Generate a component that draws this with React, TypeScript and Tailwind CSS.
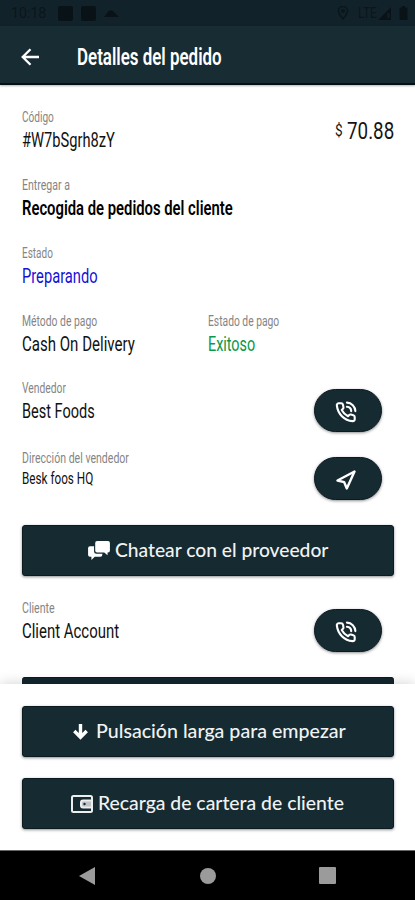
import { useLayoutEffect, useRef, useState, type ReactNode } from 'react';

/** Condensed text: squeezes its glyphs horizontally to occupy `width` pixels. */
function Fit({ width, className = '', children }: { width: number; className?: string; children: ReactNode }) {
  const ref = useRef<HTMLSpanElement>(null);
  const [scale, setScale] = useState(1);
  useLayoutEffect(() => {
    if (ref.current) setScale(width / ref.current.offsetWidth);
  }, [width]);
  return (
    <span className="block text-left" style={{ width }}>
      <span ref={ref} className={`inline-block origin-left whitespace-nowrap ${className}`} style={{ transform: `scaleX(${scale})` }}>
        {children}
      </span>
    </span>
  );
}

function Field({ label, labelWidth, value, valueWidth, tone = 'text-[#111] font-normal', small = false }: {
  label: string; labelWidth: number; value: string; valueWidth: number; tone?: string; small?: boolean;
}) {
  return (
    <div className="flex flex-col">
      <div className="h-5 leading-[21px] text-[14.5px] text-[#858585]"><Fit width={labelWidth}>{label}</Fit></div>
      <div className={small ? 'h-[22px] leading-[22px] text-[16.5px]' : 'h-[26px] leading-[26px] text-[20.5px]'}>
        <Fit width={valueWidth} className={tone}>{value}</Fit>
      </div>
    </div>
  );
}

function Pill({ children }: { children: ReactNode }) {
  return (
    <button className="flex h-[43px] w-[68px] items-center justify-center rounded-full border border-[#0a1a20] bg-[#162a32] pr-[5px] pt-[2px] text-white shadow-[0_1px_3px_rgba(0,0,0,0.45)]">
      {children}
    </button>
  );
}

function Phone() {
  return (
    <svg width="22" height="22" viewBox="0 0 24 24" fill="none" stroke="currentColor" strokeWidth="2.300" strokeLinecap="round" strokeLinejoin="round">
      <path d="M6.800 2.500H4A2 2 0 0 0 2 4.700C3 14 10 21.200 19.300 22a2 2 0 0 0 2.200-2v-2.600a2 2 0 0 0-1.500-1.900l-2.600-.7a2 2 0 0 0-1.900.5l-1.300 1.300a15 15 0 0 1-6.800-6.800l1.300-1.300a2 2 0 0 0 .5-1.900L8.700 4a2 2 0 0 0-1.900-1.500z" />
      <path d="M13 1.800a9.500 9.500 0 0 1 9.200 9.200M13 6.300a5 5 0 0 1 4.700 4.700" />
    </svg>
  );
}

function Wide({ icon, width, children }: { icon: ReactNode; width: number; children: ReactNode }) {
  return (
    <button className="flex h-[51px] w-[372px] shrink-0 items-center rounded-[3px] border border-[#0a1a20] bg-[#162a32] font-[Lato,sans-serif] text-[18.5px] leading-6 text-[#f1f3f3] shadow-[0_1px_3px_rgba(0,0,0,0.45)]">
      {icon}
      <div className="pb-[2px]"><Fit width={width} className="font-medium">{children}</Fit></div>
    </button>
  );
}

export default function App() {
  return (
    <div className="flex h-[900px] w-[415px] flex-col overflow-hidden bg-white font-[Roboto,sans-serif]">
      <div className="flex h-[26px] shrink-0 items-center bg-[#12222a] pl-[11px] text-[#0a161b]">
        <div className="w-[47px] text-[15px]"><Fit width={35}>10:18</Fit></div>
        <span className="size-[15px] rounded-[2px] bg-[#091317]" />
        <span className="ml-2 size-[15px] rounded-[2px] bg-[#091317]" />
        <svg className="ml-2" width="15" height="9" viewBox="0 0 15 9" fill="#091317"><path d="M0 8 3 4a4 4 0 0 1 7-1l5 5z" /></svg>
        <svg className="ml-[218px]" width="12" height="14" viewBox="0 0 12 14" fill="none" stroke="currentColor" strokeWidth="1.6"><path d="M6 13C3 9 1.500 7.500 1.500 5a4.500 4.500 0 0 1 9 0C10.500 7.500 9 9 6 13z" /><circle cx="6" cy="5" r="1.300" /></svg>
        <div className="ml-[9px] w-[20px] text-[14px]"><Fit width={19}>LTE</Fit></div>
        <svg width="13" height="13" viewBox="0 0 13 13"><path d="M0 13 13 0v13z" fill="#091317" /><path d="M9 6h3v5H9z" fill="#12222a" opacity=".6" /></svg>
        <svg className="ml-2" width="9" height="14" viewBox="0 0 9 14" fill="#091317"><path d="M3 0h3v1.500h2.500V14h-8V1.500H3z" /></svg>
      </div>
      <header className="flex h-[59px] shrink-0 items-center border-b-2 border-[#061116] bg-[#182c34] pl-[21px] pt-[4px] text-white shadow-[0_1px_2px_rgba(0,0,0,0.3)]">
        <svg width="18" height="18" viewBox="0 0 18 18" fill="none" stroke="currentColor" strokeWidth="2.300"><path d="M18 9H2M9.500 1.200 1.700 9l7.800 7.800" /></svg>
        <h1 className="ml-[38px] pt-[3px] text-[23px] leading-7"><Fit width={145} className="font-semibold">Detalles del pedido</Fit></h1>
      </header>

      <main className="flex h-[599px] shrink-0 flex-col overflow-hidden pl-[22px] pr-[21px] pt-[22px]">
        <div className="flex h-[68px] shrink-0 justify-between">
          <Field label="Código" labelWidth={32} value="#W7bSgrh8zY" valueWidth={93} />
          <div className="flex h-12 items-center text-[#151515]">
            <div className="text-[17px]"><Fit width={8}>$</Fit></div>
            <div className="ml-1 text-[24px]"><Fit width={47}>70.88</Fit></div>
          </div>
        </div>
        <div className="h-[68px] shrink-0"><Field label="Entregar a" labelWidth={48} value="Recogida de pedidos del cliente" valueWidth={211} tone="text-black font-semibold" /></div>
        <div className="h-[68px] shrink-0"><Field label="Estado" labelWidth={31} value="Preparando" valueWidth={76} tone="text-[#1610d8]" /></div>
        <div className="flex h-[67px] shrink-0">
          <div className="w-[186px]"><Field label="Método de pago" labelWidth={75} value="Cash On Delivery" valueWidth={113} /></div>
          <Field label="Estado de pago" labelWidth={71} value="Exitoso" valueWidth={47} tone="text-[#07984a]" />
        </div>
        <div className="flex h-[70px] shrink-0 justify-between pr-3">
          <Field label="Vendedor" labelWidth={44} value="Best Foods" valueWidth={73} />
          <div className="pt-[11px]"><Pill><Phone /></Pill></div>
        </div>
        <div className="flex h-[77px] shrink-0 justify-between pr-3">
          <Field label="Dirección del vendedor" labelWidth={107} value="Besk foos HQ" valueWidth={71} small />
          <div className="pt-[9px]"><Pill>
            <svg width="20" height="20" viewBox="0 0 20 20" fill="none" stroke="currentColor" strokeWidth="2.400" strokeLinejoin="round"><path d="M18.500 1.500 1.500 10.500 8.200 12.200 10.800 18.500z" /></svg>
          </Pill></div>
        </div>
        <Wide width={213} icon={
          <svg className="ml-[65px] mr-[5px] shrink-0" width="22" height="19" viewBox="0 0 23 20" fill="white"><path d="M9.500 0H21a2 2 0 0 1 2 2v8a2 2 0 0 1-2 2h-.5v3L17 12H9.500a2 2 0 0 1-2-2V2a2 2 0 0 1 2-2z" /><path d="M2 5.500h4.300V11a2.500 2.500 0 0 0 2.500 2.500H15v1a2 2 0 0 1-2 2H7L3.500 20v-3.500H2a2 2 0 0 1-2-2v-7a2 2 0 0 1 2-2z" /></svg>
        }>Chatear con el proveedor</Wide>
        <div className="mt-[22px] flex h-[79px] shrink-0 justify-between pr-3">
          <Field label="Cliente" labelWidth={33} value="Client Account" valueWidth={97} />
          <div className="pt-[11px]"><Pill><Phone /></Pill></div>
        </div>
        <div className="h-[51px] shrink-0 rounded-[3px] border-t border-[#0a1a20] bg-[#12262e]" />
      </main>

      <footer className="relative flex h-[166px] shrink-0 flex-col gap-[21px] bg-white px-[22px] pt-[22px] shadow-[0_-1px_12px_rgba(0,0,0,0.16)]">
        <Wide width={250} icon={
          <svg className="ml-[50px] mr-[8px] shrink-0" width="15" height="16" viewBox="0 0 15 16" fill="none" stroke="white" strokeWidth="3.400"><path d="M7.500 0v13M1.300 7l6.200 6.300L13.700 7" /></svg>
        }>Pulsación larga para empezar</Wide>
        <Wide width={246} icon={
          <svg className="ml-[48px] mr-[5px] shrink-0" width="22" height="18" viewBox="0 0 22 18" fill="none" stroke="#eee" strokeWidth="2"><rect x="1" y="1" width="20" height="16" rx="1.500" /><path d="M21 5.500h-9a2 2 0 0 0-2 2v3a2 2 0 0 0 2 2h9z" fill="#bfc5c7" /><circle cx="13.500" cy="9" r="1.200" fill="#162a32" stroke="none" /></svg>
        }>Recarga de cartera de cliente</Wide>
      </footer>

      <nav className="relative flex h-[50px] shrink-0 items-center border-t border-[#666] bg-black pl-[79px]">
        <svg width="16" height="18" viewBox="0 0 16 18" fill="#9b9b9b"><path d="M16 0v18L0 9z" /></svg>
        <span className="ml-[105px] size-4 rounded-full bg-[#9b9b9b]" />
        <span className="ml-[103px] size-[17px] rounded-[1px] bg-[#9b9b9b]" />
      </nav>
    </div>
  );
}
